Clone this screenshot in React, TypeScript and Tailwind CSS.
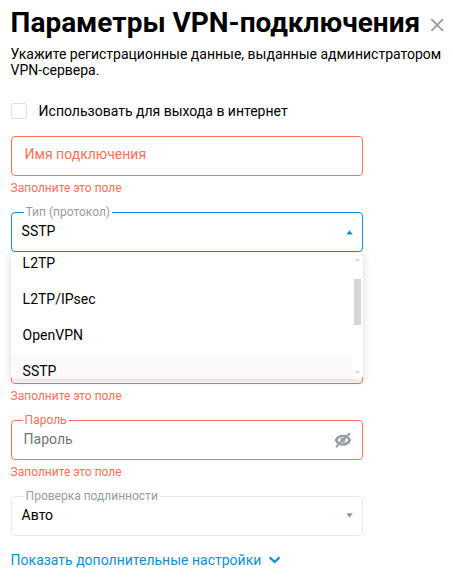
import type { ReactNode } from "react";

const protocols = ["L2TP", "L2TP/IPsec", "OpenVPN", "SSTP"];

function FieldError() {
    return <p className="mt-1 h-4 text-xs leading-4 text-[#ff7058]">Заполните это поле</p>
}

function Field({ label, className, labelClassName, children }: { label?: string; className: string; labelClassName?: string; children?: ReactNode }) {
    return(
        <div className={`relative flex h-10 w-[352px] items-center rounded border ${className}`}>
          {label && <span className={`absolute -top-[9px] bg-white text-xs leading-4 ${labelClassName}`}>{label}</span>}
          {children}
        </div>
    )
}

export default function App(){
    return(
        <main className="h-[579px] w-[453px] overflow-hidden bg-white pl-[10.6px] text-sm text-black font-['Roboto','Noto_Sans',sans-serif]">
          <header className="flex items-start pt-[7px]">
            <h1 className="w-[418px] whitespace-nowrap text-[28px] leading-8 font-bold">Параметры VPN-подключения</h1>
            <button aria-label="Закрыть" className="mt-[11px] text-[#969da2]">
              <svg width="15" height="14" viewBox="0 0 15 14" fill="none" stroke="currentColor" strokeWidth="1.9">
                <path d="M2.4 1.2L14 12.8M14 1.2L2.4 12.8" />
              </svg>
            </button>
          </header>
          <p className="mt-[7px] w-[436px] leading-4">Укажите регистрационные данные, выданные администратором VPN-сервера.</p>

          <label className="mt-[25px] flex h-4 items-center gap-3">
            <span className="size-4 rounded-[3px] border border-[#dcdddf]"></span>
            <span>Использовать для выхода в интернет</span>
          </label>

          <div className="mt-[17px]">
            <Field className="border-[#ff7058] pb-1 pl-[13px] text-[#ff7058]">Имя подключения</Field>
            <FieldError />
          </div>

          <div className="relative mt-4">
            <Field label="Тип (протокол)" className="justify-between border-[#0e90d2] pr-[9px] pl-2.5" labelClassName="left-3 px-0.5 text-[#969da2]">
              <span className="pb-0.5">SSTP</span>
              <svg width="7" height="5" viewBox="0 0 7 5" fill="#0e90d2"><path d="M3.5 0.3L6.7 4.5H0.3z" /></svg>
            </Field>
            {/* opened list of protocols */}
            <div className="absolute top-[41px] left-0 z-10 flex h-[126px] w-[352px] overflow-hidden rounded-b bg-white shadow-[0_2px_8px_rgba(0,0,0,0.16)]">
              <ul className="-mt-[7px] w-[341px]">
                {protocols.map((name) => (
                  <li key={name} className={`flex h-9 items-center pb-0.5 pl-3 ${name === "SSTP" ? "bg-[#fafafa]" : ""}`}>{name}</li>
                ))}
              </ul>
              <div className="flex w-[11px] flex-col items-center pt-[5px] pb-[5px]">
                <svg width="5" height="3" viewBox="0 0 5 3" fill="#d5d6d8"><path d="M2.5 0L5 3H0z" /></svg>
                <div className="mt-[18px] h-[46px] w-[7px] bg-[#d5d6d8]"></div>
                <svg className="mt-auto" width="5" height="3" viewBox="0 0 5 3" fill="#d5d6d8"><path d="M0 0H5L2.5 3z" /></svg>
              </div>
            </div>
          </div>

          <div className="mt-[92px]">
            <Field className="border-[#ff7058]" />
            <FieldError />
          </div>

          <div className="mt-4">
            <Field label="Пароль" className="justify-between border-[#ff7058] pr-[11px] pl-3" labelClassName="left-[11px] px-0.5 text-[#ff7058]">
              <span className="pb-0.5 text-[#757575]">Пароль</span>
              <svg width="17" height="16" viewBox="0 0 17 16" fill="none" stroke="#969da2">
                <path d="M2 8.2C3.7 4.9 6 4 8.9 4S14.1 4.9 15.8 8.2C14.1 11.5 11.8 12.5 8.9 12.5S3.7 11.5 2 8.2z" strokeWidth="2.6" />
                <circle cx="8.9" cy="8.2" r="2.5" fill="#969da2" stroke="none" />
                <path d="M3.6 14.8L16.5 1.9" stroke="#fff" strokeWidth="0.9" />
                <path d="M2 15.1L15.9 1.2" strokeWidth="2" />
              </svg>
            </Field>
            <FieldError />
          </div>

          <div className="mt-4">
            <Field label="Проверка подлинности" className="justify-between border-[#e9eaeb] pr-[9px] pb-0.5 pl-2.5" labelClassName="left-3 px-0.5 text-[#969da2]">
              <span>Авто</span>
              <svg width="7" height="5" viewBox="0 0 7 5" fill="#8f969b"><path d="M0.3 0.3H6.7L3.5 4.8z" /></svg>
            </Field>
          </div>

          <button className="mt-4 flex items-center gap-[7px] text-[#0e90d2]">
            <span className="leading-4">Показать дополнительные настройки</span>
            <svg width="13" height="8" viewBox="0 0 13 8" fill="none" stroke="currentColor" strokeWidth="2.2"><path d="M1.7 1.4L6.6 6.1L11.5 1.4" /></svg>
          </button>
        </main>
    )
}
